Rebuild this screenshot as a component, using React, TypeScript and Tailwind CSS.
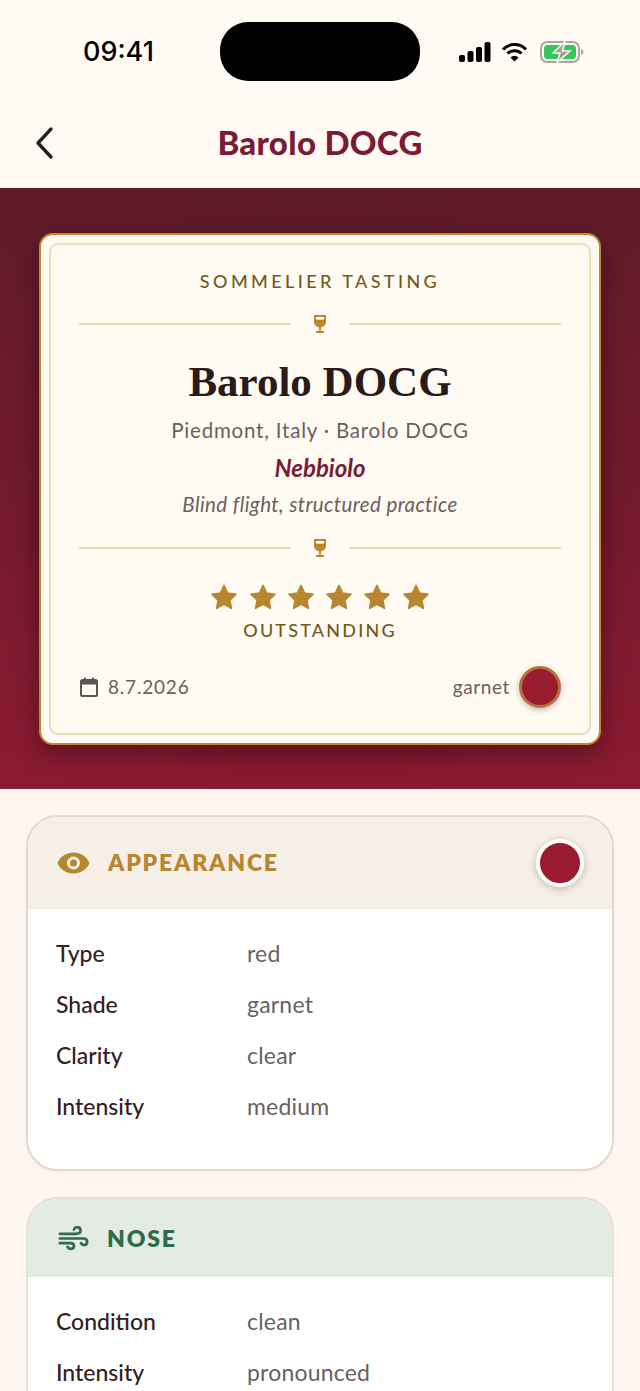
import React from "react";

const sans = "font-['Lato','Open_Sans',sans-serif]";

function Glass() {
  return (
    <svg width="14" height="20" viewBox="0 0 14 20" fill="none" className="shrink-0">
      <path d="M1 1h12v6.500a6 6 0 0 1-12 0z" fill="#b8862f" />
      <rect x="3" y="3" width="8" height="2.600" fill="#fffaf2" />
      <rect x="6" y="12" width="2" height="5" fill="#b8862f" />
      <rect x="3" y="17" width="8" height="2" rx="0.600" fill="#b8862f" />
    </svg>
  );
}

function Divider() {
  return (
    <div className="flex items-center w-full gap-[22px]">
      <div className="flex-1 h-[2px] bg-[#eadcb4]" />
      <Glass />
      <div className="flex-1 h-[2px] bg-[#eadcb4]" />
    </div>
  );
}

function Star() {
  return (
    <svg width="28" height="26" viewBox="0 0 24 23" className="shrink-0">
      <path
        d="M12 1.200l3.200 6.900 7.500.9-5.500 5.200 1.400 7.400L12 18l-6.600 3.600 1.400-7.400L1.300 9l7.500-.9z"
        fill="#b8862f"
        stroke="#b8862f"
        strokeWidth="1.400"
        strokeLinejoin="round"
      />
    </svg>
  );
}

function Row({ label, value }: { label: string; value: string }) {
  return (
    <div className="flex items-center h-[51px]">
      <div className="w-[191px] text-[23px] font-medium text-[#33201f]">{label}</div>
      <div className="text-[23px] text-[#6b5f5f] tracking-[0.2px]">{value}</div>
    </div>
  );
}

export default function App() {
  return (
    <div className={`w-[640px] h-[1391px] overflow-hidden bg-[#fff8f2] ${sans}`}>
      {/* top */}
      <div className="bg-[#fffaf4] h-[188px] flex flex-col">
        <div className="h-[100px] pt-[22px] flex items-start">
          <div className="w-[220px] pl-[83px] pt-[14px] text-[27px] leading-[32px] font-['Inter',sans-serif] font-medium text-black">
            09:41
          </div>
          <div className="w-[200px] h-[59px] rounded-[28px] bg-black" />
          <div className="flex items-center gap-[11px] pl-[39px] pt-[19px]">
            <svg width="32" height="20" viewBox="0 0 32 20">
              <rect x="0" y="13" width="6" height="7" rx="2" fill="#000" />
              <rect x="8.500" y="9" width="6" height="11" rx="2" fill="#000" />
              <rect x="17" y="5" width="6" height="15" rx="2" fill="#000" />
              <rect x="25.500" y="0" width="6" height="20" rx="2" fill="#000" />
            </svg>
            <svg width="27" height="20" viewBox="0 0 27 20" fill="none" className="-ml-[1px]">
              <path d="M2 7.500a16 16 0 0 1 23 0" stroke="#000" strokeWidth="3" />
              <path d="M6.500 11.500a10 10 0 0 1 14 0" stroke="#000" strokeWidth="3" />
              <path d="M13.500 19.500l-4-4a5.600 5.600 0 0 1 8 0z" fill="#000" />
            </svg>
            <svg width="44" height="22" viewBox="0 0 44 22" className="ml-[1px]">
              <rect x="1" y="1" width="38" height="20" rx="6" fill="none" stroke="#a8a8a0" strokeWidth="2" />
              <rect x="4" y="4" width="32" height="14" rx="3.500" fill="#35c75a" />
              <path d="M41 8v6c1.600-.5 2.400-1.700 2.400-3s-.8-2.500-2.400-3z" fill="#a8a8a0" />
              <path d="M25 0.500L13 12h7l-3 9.500L30 10h-7.500z" fill="#a0a09a" stroke="#fffaf4" strokeWidth="1.500" />
            </svg>
          </div>
        </div>
        <div className="relative flex items-center justify-center h-[48px] mt-[19px]">
          <svg width="24" height="34" viewBox="0 0 24 34" fill="none" className="absolute left-[33px] top-[7px]">
            <path d="M18 3L5 17l13 14" stroke="#2a1f1f" strokeWidth="3.400" strokeLinecap="round" strokeLinejoin="round" />
          </svg>
          <div className="text-[33px] font-black text-[#7a1c36] tracking-[0.3px]">Barolo DOCG</div>
        </div>
      </div>

      {/* hero */}
      <div className="h-[601px] pt-[45px] px-[39px] bg-gradient-to-b from-[#5e1a28] to-[#8b1a32] relative">
        <div className="absolute inset-0 bg-[radial-gradient(ellipse_at_center,rgba(60,10,20,0.45),rgba(60,10,20,0)_75%)]" />
        <div className="relative h-[512px] rounded-[14px] bg-[#fffaf2] border-2 border-[#c28a30] p-[8px] shadow-[0_8px_24px_rgba(0,0,0,0.35)]">
          <div className="h-full rounded-[9px] border-2 border-[#ecdfbc] flex flex-col items-center px-[28px] pt-[23px]">
            <div className="text-[18px] leading-[26px] tracking-[3.400px] font-medium text-[#73591c]">SOMMELIER TASTING</div>
            <div className="w-full mt-[20px]">
              <Divider />
            </div>
            <h1 className="mt-[20px] text-[43px] leading-[56px] font-bold font-['Liberation_Serif',serif] text-[#2a1a1a]">
              Barolo DOCG
            </h1>
            <div className="mt-[6px] text-[20.500px] leading-[28px] text-[#6b5f5f] tracking-[0.8px]">Piedmont, Italy · Barolo DOCG</div>
            <div className="mt-[10px] text-[24px] leading-[28px] italic font-bold text-[#7a1c36]">Nebbiolo</div>
            <div className="mt-[9px] text-[20.500px] leading-[26px] italic text-[#6b5f5f] tracking-[0.4px]">Blind flight, structured practice</div>
            <div className="w-full mt-[21px]">
              <Divider />
            </div>
            <div className="mt-[26px] flex gap-[10.300px]">
              <Star />
              <Star />
              <Star />
              <Star />
              <Star />
              <Star />
            </div>
            <div className="mt-[8px] text-[18px] leading-[24px] tracking-[2.200px] font-medium text-[#73591c]">OUTSTANDING</div>
            <div className="w-full flex items-center justify-between mt-[24px]">
              <div className="flex items-center gap-[9px]">
                <svg width="20" height="22" viewBox="0 0 20 22" fill="none">
                  <rect x="2" y="4" width="16" height="16" rx="1.500" stroke="#5f5252" strokeWidth="2" />
                  <rect x="2" y="4" width="16" height="4.500" fill="#5f5252" />
                  <path d="M6 1.500v3M14 1.500v3" stroke="#5f5252" strokeWidth="2" />
                </svg>
                <span className="text-[19px] text-[#6b5f5f] tracking-[0.8px]">8.7.2026</span>
              </div>
              <div className="flex items-center gap-[9px]">
                <span className="text-[19px] text-[#6b5f5f] tracking-[0.6px]">garnet</span>
                <div className="w-[42px] h-[42px] rounded-full bg-[#9b1b30] border-[3px] border-[#b5713a] shadow-[0_2px_6px_rgba(0,0,0,0.25)]" />
              </div>
            </div>
          </div>
        </div>
      </div>

      {/* cards */}
      <div className="px-[26px] pt-[26px] flex flex-col gap-[26px]">
        <section className="h-[356px] rounded-[32px] border-2 border-[#e6d8cf] bg-white overflow-hidden shadow-[0_1px_4px_rgba(90,40,30,0.06)]">
          <div className="h-[92px] bg-[#f6efe6] flex items-center px-[29px] gap-[18px]">
            <svg width="33" height="22" viewBox="0 0 33 22" className="shrink-0">
              <path
                fillRule="evenodd"
                d="M16.500 0.500C24 0.500 30 5 32.500 11 30 17 24 21.500 16.500 21.500S3 17 0.500 11C3 5 9 0.500 16.500 0.500zM16.500 4.500a6.500 6.500 0 1 0 0 13 6.500 6.500 0 0 0 0-13zM16.500 7.500a3.500 3.500 0 1 1 0 7 3.500 3.500 0 0 1 0-7z"
                fill="#b8862f"
              />
            </svg>
            <div className="flex-1 text-[23px] font-extrabold tracking-[1.800px] text-[#b8862f] -mt-[2px]">APPEARANCE</div>
            <div className="w-[48px] h-[48px] rounded-full bg-[#9b1b30] border-[4px] border-white shadow-[0_2px_8px_rgba(0,0,0,0.22)] -mr-[1px]" />
          </div>
          <div className="pt-[19px] px-[28px]">
            <Row label="Type" value="red" />
            <Row label="Shade" value="garnet" />
            <Row label="Clarity" value="clear" />
            <Row label="Intensity" value="medium" />
          </div>
        </section>

        <section className="rounded-[32px] border-2 border-[#f0dcd0] bg-white overflow-hidden h-[300px]">
          <div className="h-[78px] bg-[#e4ebe4] flex items-center pl-[30px] pr-[29px] gap-[18px]">
            <svg width="31" height="25" viewBox="0 0 33 26" fill="none" className="shrink-0" stroke="#2e6b4c" strokeWidth="2.900" strokeLinecap="round">
              <path d="M2 8h17c3 0 5-1.500 5-3.500S22.500 1 20.500 1 17.500 2 17 3.500" />
              <path d="M2 13h25c2.500 0 4 1.500 4 3.500S29.500 20 27.500 20 25 19 24.500 18" />
              <path d="M2 18h11c2 0 4 1 4 3s-1.500 3-3.500 3-3-1-3.500-2" />
            </svg>
            <div className="text-[23px] font-extrabold tracking-[1.800px] text-[#2e6b4c]">NOSE</div>
          </div>
          <div className="pt-[19px] px-[28px]">
            <Row label="Condition" value="clean" />
            <Row label="Intensity" value="pronounced" />
          </div>
        </section>
      </div>
    </div>
  );
}
